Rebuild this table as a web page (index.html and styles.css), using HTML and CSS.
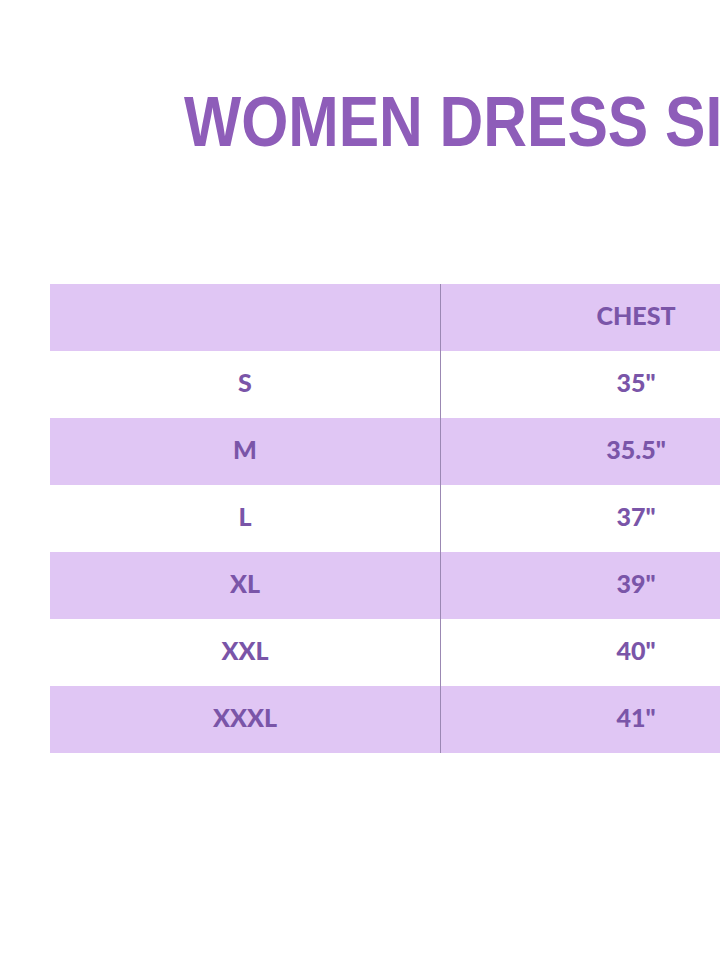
FILE: index.html
```html
<!DOCTYPE html>
<html>
<head>
<meta charset="utf-8">
<link rel="stylesheet" href="styles.css">
</head>
<body>
<div class="page">
  <h1 class="title">WOMEN DRESS SIZE CHART</h1>
  <div class="table">
    <div class="row shade"><div class="cell"></div><div class="cell">CHEST</div></div>
    <div class="row"><div class="cell">S</div><div class="cell">35"</div></div>
    <div class="row shade"><div class="cell">M</div><div class="cell">35.5"</div></div>
    <div class="row"><div class="cell">L</div><div class="cell">37"</div></div>
    <div class="row shade"><div class="cell">XL</div><div class="cell">39"</div></div>
    <div class="row"><div class="cell">XXL</div><div class="cell">40"</div></div>
    <div class="row shade"><div class="cell">XXXL</div><div class="cell">41"</div></div>
  </div>
</div>
</body>
</html>
```
FILE: styles.css
```css
html, body {
  margin: 0;
  padding: 0;
  overflow: hidden;
  background: #ffffff;
}
.page {
  width: 720px;
  height: 960px;
  overflow: hidden;
  position: relative;
}
.title {
  margin: 0;
  padding: 82px 0 0 184px;
  font-family: "Liberation Sans", Arial, sans-serif;
  font-weight: 700;
  font-size: 70px;
  line-height: 80px;
  color: #8e5db9;
  white-space: nowrap;
  transform: scaleX(0.865);
  transform-origin: 184px 0;
}
.table {
  margin: 122px 0 0 50px;
  width: 781px;
  display: flex;
  flex-direction: column;
}
.row {
  display: grid;
  grid-template-columns: 391px 390px;
  height: 67px;
}
.row.shade {
  background: #e0c6f4;
}
.cell {
  display: flex;
  align-items: center;
  justify-content: center;
  padding-bottom: 6px;
  box-sizing: border-box;
  font-family: "Lato", sans-serif;
  font-weight: 900;
  font-size: 25px;
  color: #7a55a8;
}
.cell:first-child {
  border-right: 1px solid #9b88b3;
}
```
